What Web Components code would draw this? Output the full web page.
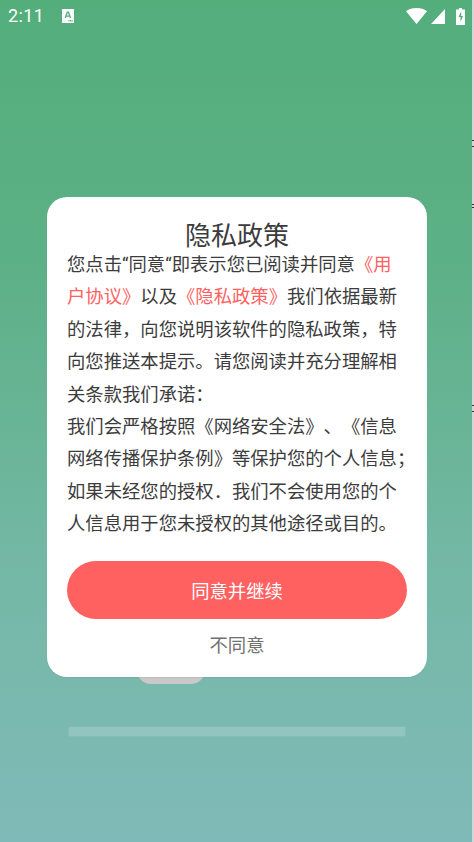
<!DOCTYPE html>
<html lang="zh">
<head>
<meta charset="utf-8">
<title>隐私政策</title>
<style>
    html, body { margin: 0; height: 100%; overflow: hidden; }
    body { font-family: "Noto Sans CJK SC", "Noto Sans", sans-serif; }
</style>
</head>
<body>
<app-screen>
    <status-bar slot="status" time="2:11"></status-bar>
    <privacy-dialog>
        <span slot="title">隐私政策</span>
        您点击<n-q>“</n-q>同意<n-q>“</n-q>即表示您已阅读并同意<a-link>《用<br>户协议》</a-link>以及<a-link>《隐私政策》</a-link>我们依据最新<br>的法律，向您说明该软件的隐私政策，特<br>向您推送本提示。请您阅读并充分理解相<br>关条款我们承诺：<br>我们会严格按照《网络安全法》、《信息<br>网络传播保护条例》等保护您的个人信息；<br>如果未经您的授权．我们不会使用您的个<br>人信息用于您未授权的其他途径或目的。
    </privacy-dialog>
</app-screen>
<script>
class AppScreen extends HTMLElement {
    constructor() {
        super()
        this.attachShadow({ mode: "open" })
        this.shadowRoot.innerHTML = `
            <style>
                :host {
                    display: flex;
                    flex-direction: column;
                    position: relative;
                    height: 842px;
                    overflow: hidden;
                    background: linear-gradient(180deg, #54ae7c 0%, #5cb085 30%, #74b8a6 68%, #80bab8 100%);
                }
                #under-pill {
                    position: absolute;
                    left: 137px;
                    top: 640px;
                    width: 68px;
                    height: 44px;
                    border-radius: 14px;
                    background: #c9c9c7;
                }
                #under-bar {
                    position: absolute;
                    left: 69px;
                    top: 727px;
                    width: 336px;
                    height: 9px;
                    background: rgba(255, 255, 255, .18);
                    box-shadow: 0 0 2px rgba(255, 255, 255, .18);
                }
                #edge {
                    position: absolute;
                    right: 0;
                    top: 0;
                    bottom: 0;
                    width: 2px;
                    background: #d3d6d6;
                }
                .mark { position: absolute; right: 0; width: 2px; height: 1px; background: #333; }
                main { flex: 1; display: flex; justify-content: center; padding-top: 169px; position: relative; }
            </style>
            <div id="under-pill"></div>
            <div id="under-bar"></div>
            <slot name="status"></slot>
            <main><slot></slot></main>
            <div id="edge"></div>
            <div class="mark" style="top:140px"></div>
            <div class="mark" style="top:146px"></div>
            <div class="mark" style="top:204px"></div>
            <div class="mark" style="top:207px"></div>
            <div class="mark" style="top:405px"></div>
            <div class="mark" style="top:411px"></div>
        `
    }
}

class StatusBar extends HTMLElement {
    constructor() {
        super()
        this.attachShadow({ mode: "open" })
    }

    connectedCallback() {
        this.shadowRoot.innerHTML = `
            <style>
                :host {
                    display: flex;
                    align-items: center;
                    height: 24px;
                    padding: 4px 9px 0 8px;
                    color: #fff;
                    font: 18px/24px Roboto, sans-serif;
                    letter-spacing: .4px;
                    position: relative;
                }
                svg { display: block; fill: #fff; }
                #time { width: 54px; }
                #right { margin-left: auto; display: flex; align-items: center; gap: 4px; }
            </style>
            <span id="time">${this.getAttribute("time")}</span>
            <svg width="12" height="14" viewBox="0 0 12 14">
                <path fill-rule="evenodd" d="M0 0h12v14H0zM4.800 2.500 2.600 9h1.500l.4-1.300h2.800L7.700 9h1.500L7 2.500zM4.900 6.500l1-3 1 3zM6.500 11h1v1.500h-1zM8 11h1v1.500H8zM9.500 11h1v1.500h-1z"/>
            </svg>
            <div id="right">
                <svg width="21" height="16" viewBox="0 0 21 16"><path d="M0 3.200C2.800 1 6.400 0 10.500 0s7.700 1 10.500 3.200L10.500 16z"/></svg>
                <svg width="14" height="15" viewBox="0 0 14 15"><path d="M0 15 14 0v15z"/></svg>
                <svg width="9" height="17" viewBox="0 0 9 17" style="margin-left:7px">
                    <path fill-rule="evenodd" d="M3 0h3v1.500h3V17H0V1.500h3zM5.200 3.500 2.500 9h2v5l2.500-6H5.200z"/>
                </svg>
            </div>
        `
    }
}

// inline hosts: no whitespace around the slot, it would render as a space
class ALink extends HTMLElement {
    constructor() {
        super()
        this.attachShadow({ mode: "open" })
        this.shadowRoot.innerHTML = `<style>:host { display: inline; color: #ff6161; }</style><slot></slot>`
    }
}

// the reference sets its quote marks narrow, from a latin face
class NarrowQuote extends HTMLElement {
    constructor() {
        super()
        this.attachShadow({ mode: "open" })
        this.shadowRoot.innerHTML = `<style>:host { display: inline; font-family: Roboto, sans-serif; line-height: 0; }</style><slot></slot>`
    }
}

class PrivacyDialog extends HTMLElement {
    constructor() {
        super()
        this.attachShadow({ mode: "open" })
        this.shadowRoot.innerHTML = `
            <style>
                :host {
                    display: flex;
                    flex-direction: column;
                    box-sizing: border-box;
                    width: 380px;
                    height: 480px;
                    padding: 20px 20px 0;
                    background: #fff;
                    border-radius: 20px;
                    box-shadow: 0 1px 1px rgba(0, 0, 0, .06);
                    font-family: "Noto Sans CJK SC", "Noto Sans", sans-serif;
                    text-spacing-trim: space-all;
                }
                h1 {
                    margin: 0;
                    height: 34px;
                    font-size: 26px;
                    line-height: 34px;
                    font-weight: 400;
                    color: #3c3c3c;
                    text-align: center;
                }
                #body {
                    margin-top: -4px;
                    font-size: 18.33px;
                    line-height: 32.4px;
                    color: #3c3c3c;
                    white-space: nowrap;
                }
                button {
                    display: block;
                    width: 340px;
                    height: 58px;
                    margin: 22px 0 0;
                    padding: 0;
                    flex: none;
                    border: 0;
                    border-radius: 29px;
                    background: #ff6161;
                    color: #fff;
                    font: inherit;
                    font-size: 18.33px;
                }
                #decline {
                    margin-top: 12px;
                    text-align: center;
                    font-size: 18.33px;
                    line-height: 27px;
                    color: #707070;
                }
            </style>
            <h1><slot name="title"></slot></h1>
            <div id="body"><slot></slot></div>
            <button type="button">同意并继续</button>
            <div id="decline">不同意</div>
        `
    }
}

customElements.define("a-link", ALink)
customElements.define("n-q", NarrowQuote)
customElements.define("status-bar", StatusBar)
customElements.define("privacy-dialog", PrivacyDialog)
customElements.define("app-screen", AppScreen)
</script>
</body>
</html>
